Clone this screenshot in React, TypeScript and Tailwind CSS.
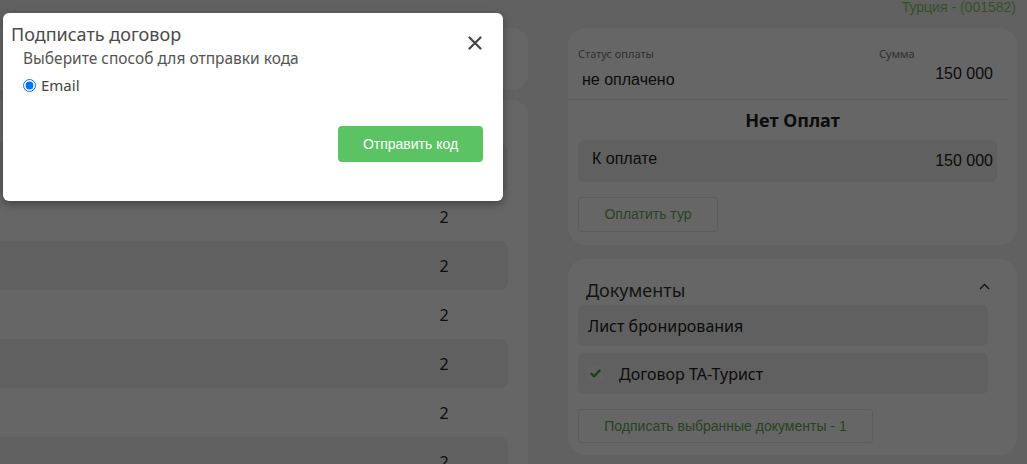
import React from 'react';

const ubuntu = { fontFamily: '"Noto Sans", "Open Sans", sans-serif' };
const arial = { fontFamily: '"Liberation Sans", Arial, sans-serif' };

const rows = [
  { name: '', count: 2 },
  { name: '', count: 2 },
  { name: 'и', count: 2 },
  { name: '', count: 2 },
  { name: '', count: 2 },
  { name: 'и', count: 2 },
  { name: '', count: 2 },
  { name: '', count: 2 },
];

const CheckMark = () => (
  <svg width="11" height="9" viewBox="0 0 11 9" fill="none">
    <path d="M1.5 4.8 L4.2 7.3 L9.5 1.6" stroke="#43a047" strokeWidth="2.4" strokeLinecap="round" strokeLinejoin="round" />
  </svg>
);

const CloseIcon = () => (
  <svg width="14" height="14" viewBox="0 0 14 14" fill="none">
    <path d="M1.5 1.5 L12.5 12.5 M12.5 1.5 L1.5 12.5" stroke="#444" strokeWidth="2.2" strokeLinecap="round" />
  </svg>
);

const ChevronUp = () => (
  <svg width="11" height="7" viewBox="0 0 11 7" fill="none">
    <path d="M1 6 L5.5 1.5 L10 6" stroke="#2a2a2a" strokeWidth="1.3" />
  </svg>
);

export default function App() {
  return (
    <div className="relative h-[464px] w-[1027px] overflow-hidden bg-[#f3f3f3]">
      <div className="flex gap-[40px]">
        {/* левая колонка */}
        <div className="ml-[-20px] w-[548px] shrink-0 pt-[28px]">
          <div className="h-[62px] rounded-[16px] bg-white" />
          <div className="mt-[10px] rounded-[16px] bg-white pb-[20px] pr-[20px] pt-[43px]">
            {rows.map((r, i) => (
              <div
                key={i}
                className={`flex h-[49px] items-center rounded-r-[8px] ${i % 2 === 0 ? 'bg-[#f0f0f0]' : ''}`}
              >
                <span className="flex-1 pl-[14px] text-[15px] text-[#1a2a6c]" style={ubuntu}>
                  {r.name && <span className="ml-[-4px]">{r.name}</span>}
                </span>
                <span className="mr-[56px] w-[16px] text-center text-[16px] text-[#222]" style={ubuntu}>
                  {r.count}
                </span>
              </div>
            ))}
          </div>
        </div>

        {/* правая колонка */}
        <div className="w-[449px] shrink-0">
          <div className="h-[28px] pr-[1px] text-right text-[14px] leading-[15px] text-[#86c95e]" style={arial}>
            Турция - (001582)
          </div>

          <div className="h-[217px] rounded-[18px] bg-white pt-[19px]">
            <div className="mr-[9px] flex h-[53px] border-b border-[#ececec] pl-[10px]">
              <div className="flex-1">
                <div className="text-[11px] leading-[14px] text-[#7a7a7a]" style={ubuntu}>Статус оплаты</div>
                <div className="mt-[10px] pl-[4px] text-[16px] leading-[18px] text-[#222]" style={arial}>не оплачено</div>
              </div>
              <div className="w-[129px] pr-[15px]">
                <div className="text-[11px] leading-[14px] text-[#7a7a7a]" style={ubuntu}>Сумма</div>
                <div className="mt-[4px] text-right text-[16px] leading-[18px] text-[#222]" style={arial}>150 000</div>
              </div>
            </div>
            <div className="mt-[8px] text-center text-[18px] font-bold leading-[24px] text-[#222]" style={ubuntu}>
              Нет Оплат
            </div>
            <div className="ml-[10px] mr-[20px] mt-[8px] flex h-[42px] items-center justify-between rounded-[6px] bg-[#f0f0f0] pl-[14px] pr-[4px] text-[16px] text-[#222]" style={arial}>
              <span className="-mt-[4px]">К оплате</span>
              <span>150 000</span>
            </div>
            <button className="ml-[10px] mt-[15px] h-[35px] w-[140px] rounded-[3px] border border-[#e6e6e6] bg-white text-[14px] text-[#6aa55a]" style={arial}>
              Оплатить тур
            </button>
          </div>

          <div className="mt-[14px] h-[196px] rounded-[18px] bg-white pt-[19px]">
            <div className="flex items-center justify-between pl-[18px] pr-[27px]">
              <span className="text-[18px] leading-[24px] text-[#333]" style={ubuntu}>Документы</span>
              <span className="-mt-[8px]"><ChevronUp /></span>
            </div>
            <div className="ml-[10px] mr-[29px] mt-[3px] flex h-[41px] items-center rounded-[6px] bg-[#f0f0f0] pl-[10px] text-[16px] text-[#222]" style={ubuntu}>
              Лист бронирования
            </div>
            <div className="ml-[10px] mr-[29px] mt-[7px] flex h-[41px] items-center rounded-[6px] bg-[#f0f0f0] pl-[10px] text-[16px] text-[#222]" style={ubuntu}>
              <span className="flex h-[15px] w-[15px] items-center justify-center rounded-[3px] bg-[#f6f6f6]">
                <CheckMark />
              </span>
              <span className="ml-[16px]">Договор ТА-Турист</span>
            </div>
            <button className="ml-[10px] mt-[15px] h-[34px] w-[295px] rounded-[3px] border border-[#e6e6e6] bg-white text-[14px] text-[#6aa55a]" style={arial}>
              Подписать выбранные документы - 1
            </button>
          </div>
        </div>
      </div>

      {/* затемнение и модальное окно */}
      <div className="absolute inset-0 bg-black/60">
        <div className="absolute left-[3px] top-[13px] flex h-[188px] w-[500px] flex-col rounded-[6px] bg-white shadow-[0_3px_8px_rgba(0,0,0,0.35)]">
          <div className="flex items-start justify-between pl-[8px] pr-[21px] pt-[9px]">
            <h3 className="text-[18px] leading-[24px] text-[#4a4a4a]" style={ubuntu}>Подписать договор</h3>
            <button className="mt-[14px]"><CloseIcon /></button>
          </div>
          <div className="pl-[20px]" style={ubuntu}>
            <p className="-mt-[2px] text-[15.5px] leading-[20px] text-[#555]">Выберите способ для отправки кода</p>
            <label className="mt-[7px] flex h-[20px] items-center text-[15px] text-[#444]">
              <input type="radio" checked readOnly className="m-0 h-[13px] w-[13px]" />
              <span className="ml-[5px]">Email</span>
            </label>
          </div>
          <div className="mt-[31px] flex justify-end pr-[20px]">
            <button className="h-[36px] w-[145px] rounded-[4px] bg-[#5bc363] text-[14px] text-white" style={arial}>
              Отправить код
            </button>
          </div>
        </div>
      </div>
    </div>
  );
}
